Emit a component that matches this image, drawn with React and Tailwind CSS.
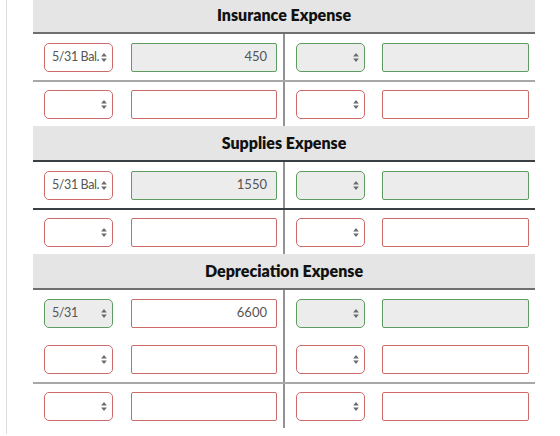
import React from "react";

const RED = "border-[#cd6b6b] bg-white";
const GREEN = "border-[#5f9c5f] bg-[#ececec]";

function Arrows() {
  return (
    <svg width="6" height="11" viewBox="0 0 6 11" className="shrink-0">
      <path d="M3 1 L5.8 4.6 L0.2 4.6 Z" fill="#6a6a6a" />
      <path d="M3 10 L5.8 6.4 L0.2 6.4 Z" fill="#6a6a6a" />
    </svg>
  );
}

function Select({ ok, value }) {
  return (
    <div
      className={`w-[69px] h-[29px] shrink-0 rounded-[5px] border flex items-center justify-between pl-[7px] pr-[5px] text-[12.5px] tracking-[-0.4px] whitespace-nowrap text-[#555] ${ok ? GREEN : RED}`}
    >
      <span>{value}</span>
      <Arrows />
    </div>
  );
}

function Field({ ok, value }) {
  return (
    <div
      className={`flex-1 h-[29px] rounded-[2px] border flex items-center justify-end pr-[9px] text-[13px] text-[#555] ${ok ? GREEN : RED}`}
    >
      {value}
    </div>
  );
}

function Side({ sel, field, gap }) {
  return (
    <div className={`w-[250px] h-full flex items-center pl-[11px] pr-[6px] ${gap}`}>
      <Select ok={sel.ok} value={sel.v} />
      <Field ok={field.ok} value={field.v} />
    </div>
  );
}

const blank = { ok: false, v: "" };
const done = { ok: true, v: "" };

function Row({ l, r, sep }) {
  return (
    <div className={`flex h-[46px] ${sep || ""}`}>
      <Side sel={l[0]} field={l[1]} gap="gap-[18px]" />
      <div className="w-[2px] h-full bg-[#939393]" />
      <Side sel={r[0]} field={r[1]} gap="gap-[17px]" />
    </div>
  );
}

function Account({ title, headBorder, rows }) {
  return (
    <div>
      <div
        className={`h-[36px] bg-[#e5e5e5] border-b-2 ${headBorder} flex items-center justify-center font-extrabold text-[16px] text-[#111]`}
      >
        {title}
      </div>
      {rows.map((row, i) => (
        <Row key={i} {...row} />
      ))}
    </div>
  );
}

export default function App() {
  return (
    <div
      className="w-[560px] h-[436px] bg-white overflow-hidden"
      style={{ fontFamily: "Lato, 'Noto Sans', sans-serif" }}
    >
      <div className="ml-[6px] h-full border-l border-[#dedede] pl-[26px]">
        <div className="w-[502px] -mt-[2px]">
          <Account
            title="Insurance Expense"
            headBorder="border-[#6f6f6f]"
            rows={[
              {
                l: [{ ok: false, v: "5/31 Bal." }, { ok: true, v: "450" }],
                r: [done, done],
              },
              { l: [blank, blank], r: [blank, blank], sep: "border-t-2 border-[#a8a8a8]" },
            ]}
          />
          <Account
            title="Supplies Expense"
            headBorder="border-[#3a3f44]"
            rows={[
              {
                l: [{ ok: false, v: "5/31 Bal." }, { ok: true, v: "1550" }],
                r: [done, done],
              },
              { l: [blank, blank], r: [blank, blank], sep: "border-t-2 border-[#3a3f44]" },
            ]}
          />
          <Account
            title="Depreciation Expense"
            headBorder="border-[#6f6f6f]"
            rows={[
              {
                l: [{ ok: true, v: "5/31" }, { ok: false, v: "6600" }],
                r: [done, done],
              },
              { l: [blank, blank], r: [blank, blank] },
              { l: [blank, blank], r: [blank, blank], sep: "border-t-2 border-[#a8a8a8]" },
            ]}
          />
        </div>
      </div>
    </div>
  );
}
